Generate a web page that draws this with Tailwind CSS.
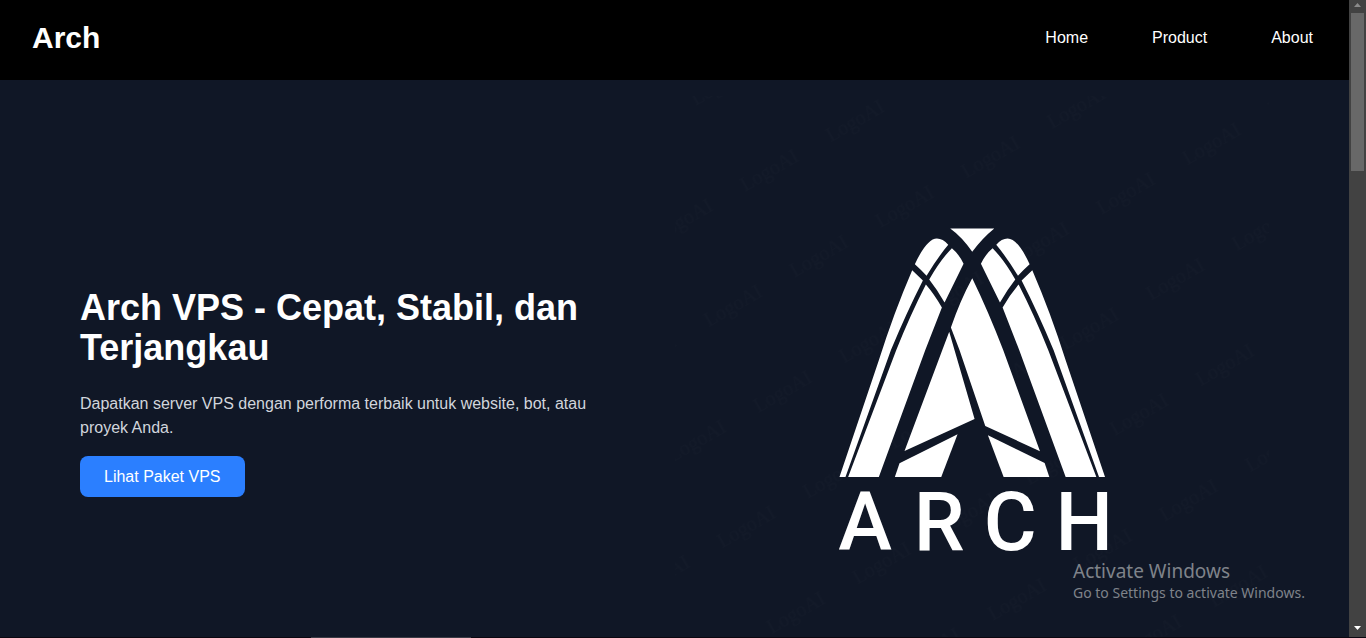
<!DOCTYPE html>
<html lang="id">
<head>
<meta charset="utf-8">
<meta name="viewport" content="width=device-width, initial-scale=1">
<title>Arch VPS</title>
<script src="https://cdn.jsdelivr.net/npm/@tailwindcss/browser@4"></script>
</head>
<body class="h-screen overflow-hidden bg-[#101726] font-['Liberation_Sans',Arial,sans-serif] text-white">
<div class="flex h-full flex-col">
  <div class="flex min-h-0 flex-1">
    <div class="min-w-0 flex-1 overflow-hidden">
      <header class="flex h-20 items-center justify-between bg-black pr-9 pb-1 pl-8">
        <a href="#" class="text-3xl font-bold">Arch</a>
        <nav class="flex gap-16 text-base">
          <a href="#home">Home</a>
          <a href="#product">Product</a>
          <a href="#about">About</a>
        </nav>
      </header>
      <main class="grid grid-cols-2 items-center px-20 py-4">
        <section class="max-w-lg">
          <h1 class="text-4xl font-bold">Arch VPS - Cepat, Stabil, dan Terjangkau</h1>
          <p class="mt-6 text-base text-gray-300">Dapatkan server VPS dengan performa terbaik untuk website, bot, atau proyek Anda.</p>
          <button type="button" class="mt-4 mb-px h-[41px] rounded-lg bg-[#2b7fff] px-6 text-base">Lihat Paket VPS</button>
        </section>
        <svg class="aspect-square w-full" viewBox="675 96 594 594" fill="#fff" role="img" aria-label="Arch">
          <defs>
            <pattern id="mark" width="99" height="99" patternUnits="userSpaceOnUse" patternTransform="translate(855 121) rotate(-30) translate(-49 -49)">
              <text x="49" y="55" text-anchor="middle" font-family="Liberation Serif, serif" font-size="20" fill="#fff" fill-opacity="0.012">LogoAI</text>
            </pattern>
            <g id="wing">
              <path d="M254 132Q290 55 320 55Q338 55 354 74Q320 115 289 167Q270 146 254 132Z"/>
              <path d="M365 84Q385 100 400 131L343 247Q320 207 297 178Q330 120 365 84Z"/>
              <path d="M246 150L278 181Q230 275 182 390L46 770H28L146 420Q190 280 246 150Z"/>
              <path d="M287 193Q312 222 335 262L285 390L146 770H54L198 390Q240 285 287 193Z"/>
            </g>
          </defs>
          <rect x="675" y="96" width="594" height="594" fill="url(#mark)"/>
          <g transform="translate(830 220) scale(.33333)">
            <path d="M360 25H492Q455 55 426 95Q395 50 360 25Z"/>
            <use href="#wing"/>
            <use href="#wing" transform="translate(852 0) scale(-1 1)"/>
            <path d="M426 174Q475 275 519 390L629 693L465 617L388 390L362 322Q390 240 426 174Z"/>
            <path d="M357 335L373 390L433 596L223 692L336 390Z"/>
            <path d="M382 642L333 770H194L208 729Z"/>
            <path d="M473 645L643 728L657 770H520Z"/>
          </g>
          <text x="865 939 1010 1084" y="550" text-anchor="middle" font-family="Roboto, sans-serif" font-size="81" font-weight="500">ARCH</text>
        </svg>
      </main>
    </div>
    <div class="flex w-[17px] flex-col items-center justify-between bg-[#424242]">
      <div class="flex w-full flex-col items-center">
        <svg class="h-[13px] w-[17px]" viewBox="0 0 17 13" fill="#8b8b8b"><path d="M5 7L8.5 3L12 7Z"/></svg>
        <div class="h-[158px] w-[13px] bg-[#686868]"></div>
      </div>
      <svg class="h-[15px] w-[17px]" viewBox="0 0 17 15" fill="#fff"><path d="M5 4L8.5 8L12 4Z"/></svg>
    </div>
  </div>
  <div class="h-px bg-[#0b0710] pl-[311px]"><div class="h-px w-40 bg-[#3b3b45]"></div></div>
</div>
<aside class="pointer-events-none absolute top-[559px] left-[1073px] font-['Noto_Sans','Open_Sans',sans-serif] whitespace-nowrap text-[#7f838a]">
  <p class="text-[19px] leading-6">Activate Windows</p>
  <p class="text-[14px] leading-5">Go to Settings to activate Windows.</p>
</aside>
</body>
</html>
